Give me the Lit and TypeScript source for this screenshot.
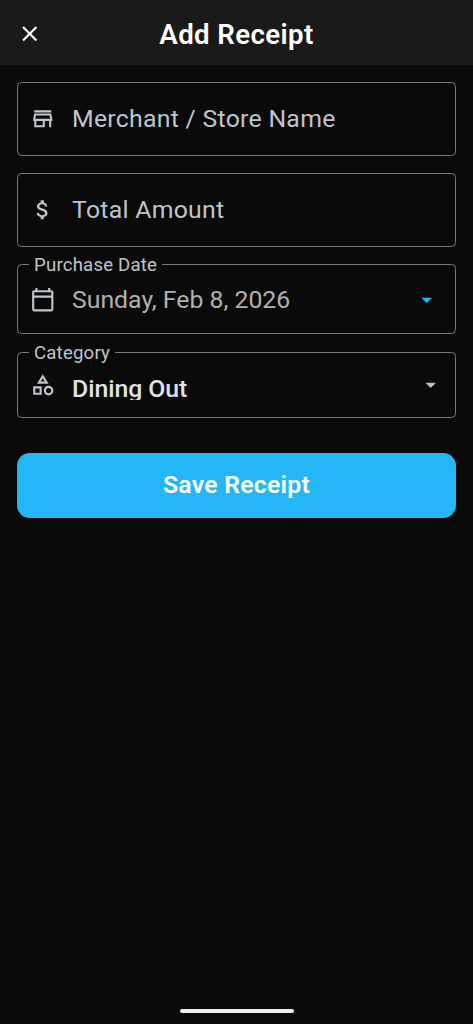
import { LitElement, html, css, svg } from "lit";
import { customElement } from "lit/decorators.js";

const icon = (path: unknown, cls = "") =>
  html`<svg class="icon ${cls}" viewBox="0 0 24 24" aria-hidden="true">${path}</svg>`;

const closeIcon = svg`<path d="M19 6.41 17.59 5 12 10.59 6.41 5 5 6.41 10.59 12 5 17.59 6.41 19 12 13.41 17.59 19 19 17.59 13.41 12z"/>`;
const storeIcon = svg`<path d="M18.36 9l.6 3H5.04l.6-3h12.72M20 4H4v2h16V4zm0 3H4l-1 5v2h1v6h10v-6h4v6h2v-6h1v-2l-1-5zM6 18v-4h6v4H6z"/>`;
const moneyIcon = svg`<path d="M11.8 10.9c-2.27-.59-3-1.2-3-2.15 0-1.09 1.01-1.85 2.7-1.85 1.78 0 2.44.85 2.5 2.1h2.21c-.07-1.72-1.12-3.3-3.21-3.81V3h-3v2.16c-1.94.42-3.5 1.68-3.5 3.61 0 2.31 1.91 3.46 4.7 4.13 2.5.6 3 1.48 3 2.41 0 .69-.49 1.79-2.7 1.79-2.06 0-2.87-.92-2.98-2.1h-2.2c.12 2.19 1.76 3.42 3.68 3.83V21h3v-2.15c1.95-.37 3.5-1.5 3.5-3.55 0-2.84-2.43-3.81-4.7-4.4z"/>`;
const calendarIcon = svg`<path d="M20 3h-1V1h-2v2H7V1H5v2H4c-1.1 0-2 .9-2 2v16c0 1.100.9 2 2 2h16c1.100 0 2-.9 2-2V5c0-1.100-.9-2-2-2zm0 18H4V10h16v11zm0-13H4V5h16v3z"/>`;
const categoryIcon = svg`<path d="M12 2l-5.500 9h11L12 2zm0 3.840L13.930 9h-3.870L12 5.840zM17.500 13c-2.490 0-4.500 2.010-4.500 4.500s2.010 4.500 4.500 4.500 4.500-2.010 4.500-4.500-2.010-4.500-4.500-4.500zm0 7c-1.380 0-2.500-1.120-2.500-2.500s1.120-2.500 2.500-2.500 2.500 1.120 2.500 2.500-1.120 2.500-2.500 2.500zM3 21.500h8v-8H3v8zm2-6h4v4H5v-4z"/>`;
const arrowIcon = svg`<path d="M7 10l5 5 5-5z"/>`;

@customElement("app-root")
export class AppRoot extends LitElement {
  static styles = css`
    :host {
      display: flex;
      flex-direction: column;
      box-sizing: border-box;
      height: 100vh;
      background: #0a0a0a;
      color: #fff;
      font-family: Roboto, sans-serif;
      overflow: hidden;
    }
    .bar {
      display: grid;
      grid-template-columns: 59px 1fr 59px;
      align-items: center;
      height: 65px;
      padding-top: 3px;
      box-sizing: border-box;
      background: #1a1a1a;
      flex: none;
    }
    .icon {
      display: block;
      width: 25.5px;
      height: 25.5px;
      fill: currentColor;
      flex: none;
    }
    .close {
      justify-self: center;
    }
    h1 {
      margin: 0;
      padding-top: 2px;
      text-align: center;
      font-size: 27.6px;
      line-height: 36px;
      font-weight: 600;
      letter-spacing: 0.4px;
      white-space: nowrap;
    }
    form {
      display: flex;
      flex-direction: column;
      padding: 17px 17px 0;
      flex: 1;
    }
    .field {
      position: relative;
      display: flex;
      align-items: center;
      box-sizing: border-box;
      height: 74px;
      margin: 0 0 17px;
      padding: 0 12px 0 11.5px;
      border: 1px solid #757a80;
      border-radius: 4.5px;
      color: #bfc5cd;
    }
    .text {
      margin-left: 17px;
      font-size: 24.8px;
      line-height: 32px;
      letter-spacing: 0.28px;
      white-space: nowrap;
      flex: 1;
    }
    .date {
      height: 70px;
      margin-bottom: 18px;
      padding: 2px 16px 0 11.5px;
    }
    .date .text {
      color: #b0b0b0;
      letter-spacing: 0;
    }
    .category {
      height: 66px;
      margin-bottom: 35px;
    }
    .category .text {
      color: #e0e3e8;
      font-weight: 500;
      letter-spacing: -0.05px;
      height: 30px;
      line-height: 37px;
      overflow: hidden;
    }
    .label {
      position: absolute;
      left: 11px;
      top: -12px;
      padding: 0 5px;
      background: #0a0a0a;
      font-size: 18.6px;
      line-height: 24px;
      letter-spacing: 0.2px;
      white-space: nowrap;
    }
    .blue {
      color: #24b6f7;
    }
    .gray {
      color: #bdbdbd;
    }
    .save {
      height: 65px;
      padding: 0 0 1px;
      border: 0;
      border-radius: 12.75px;
      background: #24b6f7;
      color: #fff;
      font: 600 24.8px/32px Roboto, sans-serif;
      letter-spacing: 0.25px;
    }
    .pill {
      align-self: center;
      width: 114px;
      height: 4px;
      margin-bottom: 11px;
      border-radius: 2px;
      background: #ececec;
      flex: none;
    }
  `;

  render() {
    return html`
      <header class="bar">
        ${icon(closeIcon, "close")}
        <h1>Add Receipt</h1>
      </header>
      <form>
        <div class="field">${icon(storeIcon)}<span class="text">Merchant / Store Name</span></div>
        <div class="field">${icon(moneyIcon)}<span class="text">Total Amount</span></div>
        <div class="field date">
          <span class="label">Purchase Date</span>
          ${icon(calendarIcon)}<span class="text">Sunday, Feb 8, 2026</span>${icon(arrowIcon, "blue")}
        </div>
        <div class="field category">
          <span class="label">Category</span>
          ${icon(categoryIcon)}<span class="text">Dining Out</span>${icon(arrowIcon, "gray")}
        </div>
        <button class="save" type="button">Save Receipt</button>
      </form>
      <div class="pill"></div>
    `;
  }
}
